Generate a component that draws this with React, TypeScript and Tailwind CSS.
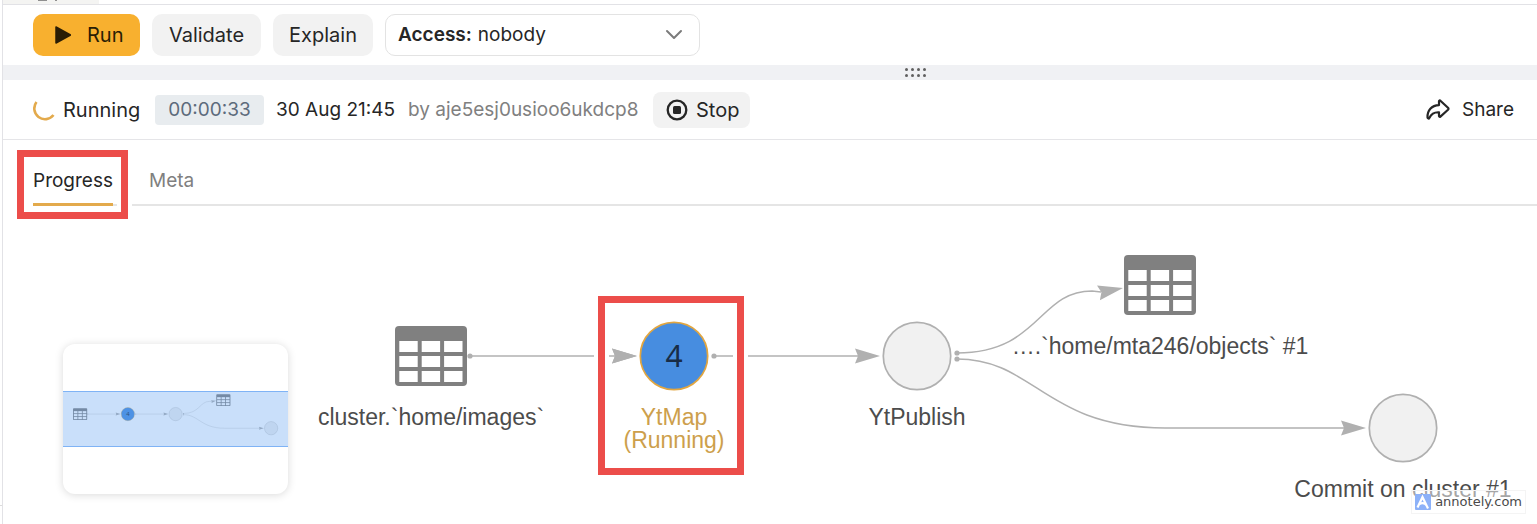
import React, { useState } from "react";

type NodeKind = "table" | "operation";

interface GraphNode {
  id: string;
  kind: NodeKind;
  x: number;
  y: number;
  lines: string[];
  count?: number;
  running?: boolean;
}

const nodes: GraphNode[] = [
  { id: "input", kind: "table", x: 428, y: 150, lines: ["cluster.`home/images`"] },
  { id: "map", kind: "operation", x: 671, y: 150, lines: ["YtMap", "(Running)"], count: 4, running: true },
  { id: "publish", kind: "operation", x: 914, y: 150, lines: ["YtPublish"] },
  { id: "output", kind: "table", x: 1157, y: 79, lines: ["….`home/mta246/objects` #1"] },
  { id: "commit", kind: "operation", x: 1400, y: 222, lines: ["Commit on cluster #1"] },
];

const edges = [
  { from: [467, 150], path: "M467 150H612", tip: "translate(634 150)" },
  { from: [711, 150], path: "M711 150H855", tip: "translate(877 150)" },
  { from: [954, 147], path: "M954 147C1037 147 1035 85 1089 85L1098 86", tip: "translate(1120 82) rotate(-11)" },
  { from: [954, 153], path: "M954 153C1032 153 1042 222 1162 222H1341", tip: "translate(1363 222)" },
];

function Edges() {
  return (
    <g>
      {edges.map((edge) => (
        <g key={edge.path}>
          <path d={edge.path} fill="none" stroke="#b0b0b0" strokeWidth="1.5" />
          <circle cx={edge.from[0]} cy={edge.from[1]} r="2.6" fill="#b0b0b0" />
          <path d="M0 0L-25 -7.5L-22 0L-25 7.5Z" transform={edge.tip} fill="#b0b0b0" />
        </g>
      ))}
    </g>
  );
}

function TableShape() {
  return (
    <g>
      <rect x="-36" y="-30" width="72" height="60" rx="4" fill="#808080" />
      {[-15, 0, 15].map((y) =>
        [-31.7, -9.3, 13.1].map((x) => (
          <rect key={`${x}:${y}`} x={x} y={y} width="18.4" height="11" fill="#fff" />
        ))
      )}
    </g>
  );
}

function NodeShape({ node }: { node: GraphNode }) {
  return (
    <g transform={`translate(${node.x} ${node.y})`}>
      {node.kind === "table" ? (
        <TableShape />
      ) : (
        <circle
          r="33.7"
          fill={node.running ? "#478de0" : "#f1f1f1"}
          stroke={node.running ? "#e2a640" : "#b0b0b0"}
          strokeWidth="1.7"
        />
      )}
    </g>
  );
}

function GraphShapes() {
  return (
    <>
      <Edges />
      {nodes.map((node) => (
        <NodeShape key={node.id} node={node} />
      ))}
    </>
  );
}

function Highlight({ className }: { className: string }) {
  return (
    <div
      className={`pointer-events-none absolute border-[7px] border-[#ec4d4a] shadow-[0_0_0_4px_#fff,inset_0_0_0_4px_#fff] ${className}`}
    />
  );
}

function Minimap() {
  return (
    <div className="absolute left-[60px] top-[138px] h-[150px] w-[225px] overflow-hidden rounded-xl bg-white shadow-[0_1px_8px_rgba(0,0,0,0.15)]">
      <svg viewBox="0 0 225 150" className="block h-full w-full" aria-hidden="true">
        <g transform="translate(-67 40.6) scale(0.1965)">
          <GraphShapes />
          <text x="671" y="161" textAnchor="middle" fontSize="30" fill="#1b2f49" className="font-['Noto_Sans',sans-serif]">
            4
          </text>
        </g>
      </svg>
      <div className="absolute inset-x-0 top-[47px] h-14 border-y border-[#7fb3f5] bg-[#5c9ff0]/33" />
    </div>
  );
}

function Graph() {
  return (
    <div className="relative min-h-[318px] flex-1 overflow-hidden font-['Liberation_Sans',Arial,sans-serif]">
      <svg width="1534" height="318" className="absolute left-0 top-0" aria-hidden="true">
        <Edges />
      </svg>
      <Highlight className="left-[595px] top-[90px] h-[179px] w-[146px]" />
      <svg width="1534" height="318" className="absolute left-0 top-0" aria-hidden="true">
        {nodes.map((node) => (
          <NodeShape key={node.id} node={node} />
        ))}
        <path d="M0 0L-25 -7.5L-22 0L-25 7.5Z" transform={edges[0].tip} fill="#b0b0b0" />
      </svg>
      {nodes.map((node) => (
        <div
          key={node.id}
          className="absolute -translate-x-1/2 whitespace-nowrap text-center text-[23px] leading-[23px]"
          style={{ left: node.x, top: node.y + 50 }}
        >
          {node.lines.map((line) => (
            <div key={line} className={node.running ? "text-[#cd9f4c]" : "text-[#4c4c4c]"}>
              {line}
            </div>
          ))}
        </div>
      ))}
      {nodes
        .filter((node) => node.count)
        .map((node) => (
          <div
            key={node.id}
            className="absolute -translate-x-1/2 -translate-y-1/2 font-['Noto_Sans',sans-serif] text-[30px] leading-8 text-[#182c46]"
            style={{ left: node.x, top: node.y }}
          >
            {node.count}
          </div>
        ))}
      <Minimap />
      <a
        href="#annotely"
        className="absolute right-[11px] top-[284px] flex h-6 items-center gap-1 border border-[#f4f4f4] bg-white/50 px-[3px] font-['DejaVu_Sans',Verdana,sans-serif] text-[13px] text-[#4a4a4a]"
      >
        <svg width="16" height="16" viewBox="0 0 16 16" aria-hidden="true">
          <rect width="16" height="16" rx="1" fill="#8cb1f8" />
          <path d="M2.5 13.5L7.5 3L13 14.5M4.5 10Q9 7.5 12 12" fill="none" stroke="#fff" strokeWidth="2.2" />
        </svg>
        annotely.com
      </a>
    </div>
  );
}

function Toolbar() {
  const [access, setAccess] = useState("nobody");

  return (
    <div className="flex h-[60px] items-center gap-3 pl-[30px]">
      <button className="flex h-[42px] w-[107px] items-center gap-4 rounded-[10px] bg-[#f8b02f] pl-[22px] text-[#2a1d05]">
        <svg width="16" height="18" viewBox="0 0 16 18" aria-hidden="true">
          <path d="M1 1L15.5 9L1 17Z" fill="#2a1d05" stroke="#2a1d05" strokeWidth="1.5" strokeLinejoin="round" />
        </svg>
        Run
      </button>
      <button className="h-[42px] w-[109px] rounded-[10px] bg-[#f2f2f2]">Validate</button>
      <button className="h-[42px] w-[100px] rounded-[10px] bg-[#f2f2f2]">Explain</button>
      <div className="relative flex h-[42px] w-[315px] items-center gap-[6px] rounded-[10px] border border-[#e3e3e3] pl-3 text-[19px]">
        <label htmlFor="access" className="font-semibold">
          Access:
        </label>
        <select
          id="access"
          value={access}
          onChange={(e) => setAccess(e.target.value)}
          className="h-full flex-1 appearance-none bg-transparent outline-none"
        >
          <option value="nobody">nobody</option>
          <option value="anyone">anyone</option>
        </select>
        <svg
          width="18"
          height="12"
          viewBox="0 0 18 12"
          className="pointer-events-none absolute right-4"
          aria-hidden="true"
        >
          <path d="M2 2L9 9L16 2" fill="none" stroke="#7b7b7b" strokeWidth="2" strokeLinecap="round" strokeLinejoin="round" />
        </svg>
      </div>
    </div>
  );
}

function StatusBar() {
  return (
    <div className="flex h-[60px] items-center justify-between border-b border-[#e5e5e8] pl-[30px] pr-[23px]">
      <div className="flex items-center gap-3 whitespace-nowrap">
        <div className="flex w-[110px] items-center gap-2">
          <svg width="22" height="22" viewBox="0 0 22 22" aria-hidden="true">
            <path d="M3.5 3A9.5 9.5 0 0 0 20.5 16" fill="none" stroke="#e3aa4c" strokeWidth="2.6" />
          </svg>
          Running
        </div>
        <span className="flex h-[30px] w-[109px] items-center justify-center rounded bg-[#e8ecef] text-[19px] text-[#5d6b7c]">
          00:00:33
        </span>
        <span className="w-[120px] text-[19px]">30 Aug 21:45</span>
        <span className="w-[233px] text-[19px] text-[#808080]">by aje5esj0usioo6ukdcp8</span>
        <button className="flex h-9 w-[97px] items-center gap-2 rounded-lg bg-[#f2f2f2] pl-[13px]">
          <svg width="22" height="22" viewBox="0 0 22 22" aria-hidden="true">
            <circle cx="11" cy="11" r="9.3" fill="none" stroke="#262626" strokeWidth="2.3" />
            <rect x="7" y="7" width="8" height="8" rx="1.5" fill="#262626" />
          </svg>
          Stop
        </button>
      </div>
      <button className="flex items-center gap-3 text-[19px]">
        <svg width="24" height="22" viewBox="0 0 24 22" aria-hidden="true">
          <path
            d="M13 2.3C13 1.5 13.8 1.2 14.4 1.7L22 8.7Q23 9.7 22 10.7L14.4 17.6C13.8 18.1 13 17.8 13 17V13.3C8.5 13 5.5 14.5 3.3 19C2.9 19.9 1.6 19.6 1.5 18.5C1.2 11.5 5.5 6.3 13 6.1Z"
            fill="none"
            stroke="#262626"
            strokeWidth="2.2"
            strokeLinejoin="round"
          />
        </svg>
        Share
      </button>
    </div>
  );
}

function Tabs() {
  return (
    <div className="flex h-[66px] items-end pl-[30px]">
      <div role="tablist" className="flex flex-1 items-end gap-9 border-b-2 border-[#e5e5e5] text-[19px]">
        <div className="relative -mb-[2px]">
          <button role="tab" aria-selected="true" className="block h-10 border-b-[3px] border-[#e3aa4c] pb-2">
            Progress
          </button>
          <Highlight className="-left-4 -top-4 h-[69px] w-[111px]" />
        </div>
        <button role="tab" aria-selected="false" className="h-[38px] pb-2 text-[#808080]">
          Meta
        </button>
      </div>
    </div>
  );
}

export default function App() {
  return (
    <div className="flex min-h-screen bg-white font-['Inter',sans-serif] text-[20px] leading-7 text-[#262626]">
      <div className="flex w-[2px] flex-col justify-end pb-[18px]">
        <div className="h-px bg-[#dcdcdc]" />
      </div>
      <div className="flex min-w-0 flex-1 flex-col border-l border-[#e2e2e6]">
        <div className="h-[5px] border-b border-[#e2e2e6]">
          <div className="flex h-1 w-24 gap-2 bg-[#f4f4f2] pl-[35px]">
            <span className="h-px w-[9px] bg-[#8f8f8f]" />
            <span className="h-px w-[2px] bg-[#8f8f8f]" />
          </div>
        </div>
        <Toolbar />
        <div className="flex h-[15px] items-center justify-center bg-[#f0f1f4] pl-[290px]">
          <div className="grid grid-cols-4 gap-[3px]">
            {[0, 1, 2, 3, 4, 5, 6, 7].map((dot) => (
              <span key={dot} className="size-[3px] rounded-full bg-[#606060]" />
            ))}
          </div>
        </div>
        <StatusBar />
        <Tabs />
        <Graph />
      </div>
    </div>
  );
}
